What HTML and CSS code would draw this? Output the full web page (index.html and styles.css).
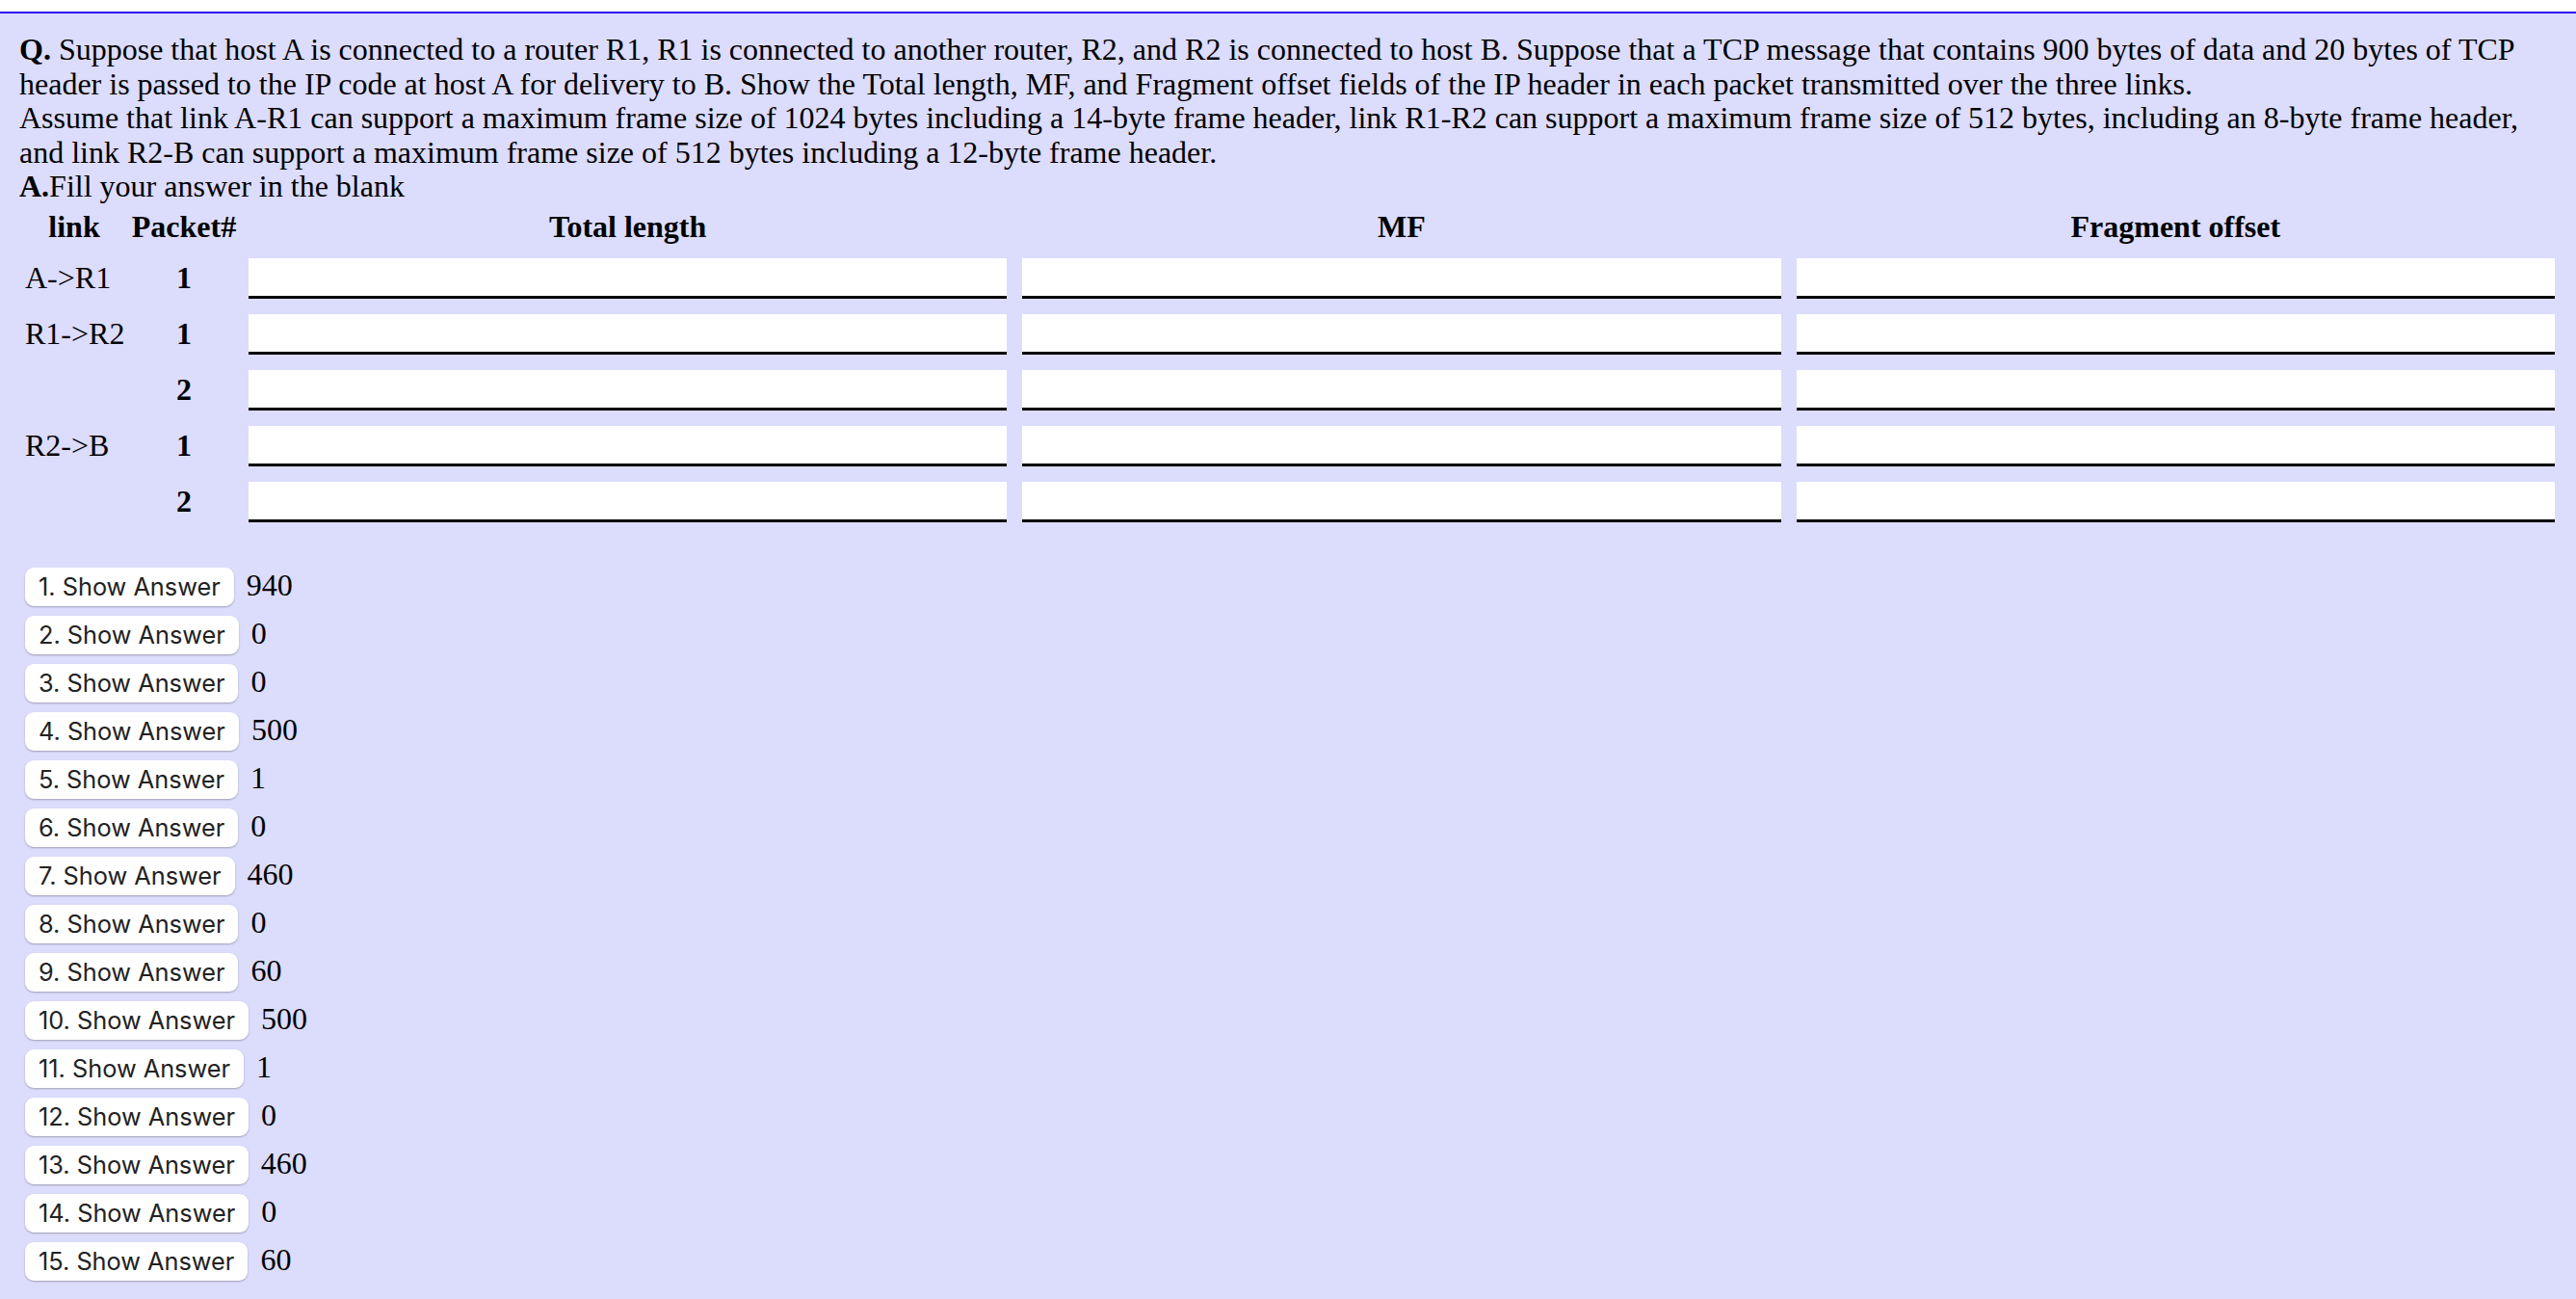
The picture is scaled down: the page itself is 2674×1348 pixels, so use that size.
FILE: index.html
```html
<!DOCTYPE html>
<html lang="en">
<head>
<meta charset="utf-8">
<title>IP Fragmentation</title>
<link rel="stylesheet" href="styles.css">
</head>
<body>
<div class="panel">
  <p class="q"><b>Q.</b> Suppose that host A is connected to a router R1, R1 is connected to another router, R2, and R2 is connected to host B. Suppose that a TCP message that contains 900 bytes of data and 20 bytes of TCP header is passed to the IP code at host A for delivery to B. Show the Total length, MF, and Fragment offset fields of the IP header in each packet transmitted over the three links.<br>Assume that link A-R1 can support a maximum frame size of 1024 bytes including a 14-byte frame header, link R1-R2 can support a maximum frame size of 512 bytes, including an 8-byte frame header, and link R2-B can support a maximum frame size of 512 bytes including a 12-byte frame header.</p>
  <p class="a"><b>A.</b>Fill your answer in the blank</p>

  <div class="sheet">
    <div class="row head">
      <div class="link">link</div>
      <div class="pkt">Packet#</div>
      <div class="cell">Total length</div>
      <div class="cell">MF</div>
      <div class="cell">Fragment offset</div>
    </div>
    <div class="row">
      <div class="link">A-&gt;R1</div>
      <div class="pkt">1</div>
      <div class="cell"><input class="blank" type="text"></div>
      <div class="cell"><input class="blank" type="text"></div>
      <div class="cell"><input class="blank" type="text"></div>
    </div>
    <div class="row">
      <div class="link">R1-&gt;R2</div>
      <div class="pkt">1</div>
      <div class="cell"><input class="blank" type="text"></div>
      <div class="cell"><input class="blank" type="text"></div>
      <div class="cell"><input class="blank" type="text"></div>
    </div>
    <div class="row">
      <div class="link"></div>
      <div class="pkt">2</div>
      <div class="cell"><input class="blank" type="text"></div>
      <div class="cell"><input class="blank" type="text"></div>
      <div class="cell"><input class="blank" type="text"></div>
    </div>
    <div class="row">
      <div class="link">R2-&gt;B</div>
      <div class="pkt">1</div>
      <div class="cell"><input class="blank" type="text"></div>
      <div class="cell"><input class="blank" type="text"></div>
      <div class="cell"><input class="blank" type="text"></div>
    </div>
    <div class="row">
      <div class="link"></div>
      <div class="pkt">2</div>
      <div class="cell"><input class="blank" type="text"></div>
      <div class="cell"><input class="blank" type="text"></div>
      <div class="cell"><input class="blank" type="text"></div>
    </div>
  </div>

  <div class="answers">
    <div class="ans"><button class="show">1. Show Answer</button><span class="val">940</span></div>
    <div class="ans"><button class="show">2. Show Answer</button><span class="val">0</span></div>
    <div class="ans"><button class="show">3. Show Answer</button><span class="val">0</span></div>
    <div class="ans"><button class="show">4. Show Answer</button><span class="val">500</span></div>
    <div class="ans"><button class="show">5. Show Answer</button><span class="val">1</span></div>
    <div class="ans"><button class="show">6. Show Answer</button><span class="val">0</span></div>
    <div class="ans"><button class="show">7. Show Answer</button><span class="val">460</span></div>
    <div class="ans"><button class="show">8. Show Answer</button><span class="val">0</span></div>
    <div class="ans"><button class="show">9. Show Answer</button><span class="val">60</span></div>
    <div class="ans"><button class="show">10. Show Answer</button><span class="val">500</span></div>
    <div class="ans"><button class="show">11. Show Answer</button><span class="val">1</span></div>
    <div class="ans"><button class="show">12. Show Answer</button><span class="val">0</span></div>
    <div class="ans"><button class="show">13. Show Answer</button><span class="val">460</span></div>
    <div class="ans"><button class="show">14. Show Answer</button><span class="val">0</span></div>
    <div class="ans"><button class="show">15. Show Answer</button><span class="val">60</span></div>
  </div>
</div>
</body>
</html>
```
FILE: styles.css
```css
html, body {
  margin: 0;
  padding: 0;
  background: #ffffff;
}

body {
  font-family: "Liberation Serif", "Times New Roman", serif;
  font-size: 32px;
  line-height: 35.6px;
  color: #000;
}

.panel {
  margin-top: 12px;
  border-top: 2px solid #2a00f0;
  background: #dcdcfc;
  padding: 20px 22px 0 20px;
  min-height: calc(100vh - 34px);
  box-sizing: content-box;
}

.q, .a {
  margin: 0;
}

.sheet {
  margin-top: 6px;
}

.row {
  display: flex;
  align-items: center;
  margin-top: 16px;
}

.row.head {
  margin-top: 0;
  font-weight: bold;
  margin-bottom: -2px;
}

.row.head .cell {
  text-align: center;
}

.link {
  width: 102px;
  margin-left: 6px;
  white-space: nowrap;
}

.row.head .link {
  text-align: center;
}

.pkt {
  width: 126px;
  text-align: center;
  font-weight: bold;
}

.cell {
  flex: 1 1 0;
  min-width: 0;
  margin-left: 16px;
}

.pkt + .cell {
  margin-left: 4px;
}

.blank {
  display: block;
  width: 100%;
  height: 42px;
  box-sizing: border-box;
  margin: 0;
  padding: 0 6px;
  border: none;
  border-bottom: 3px solid #000;
  background: #fff;
  font-family: "Liberation Serif", serif;
  font-size: 32px;
  outline: none;
}

.answers {
  margin-top: 47px;
  padding-left: 6px;
}

.ans {
  display: flex;
  align-items: baseline;
  gap: 13px;
  margin-bottom: 10px;
}

.show {
  height: 40px;
  padding: 0 14px;
  border: none;
  border-radius: 9px;
  background: #ffffff;
  box-shadow: 0 1px 2px rgba(0, 0, 0, 0.28);
  font-family: Inter, "Noto Sans", sans-serif;
  font-size: 25.3px;
  color: #222222;
  cursor: pointer;
}

.val {
  color: #000;
}
```
